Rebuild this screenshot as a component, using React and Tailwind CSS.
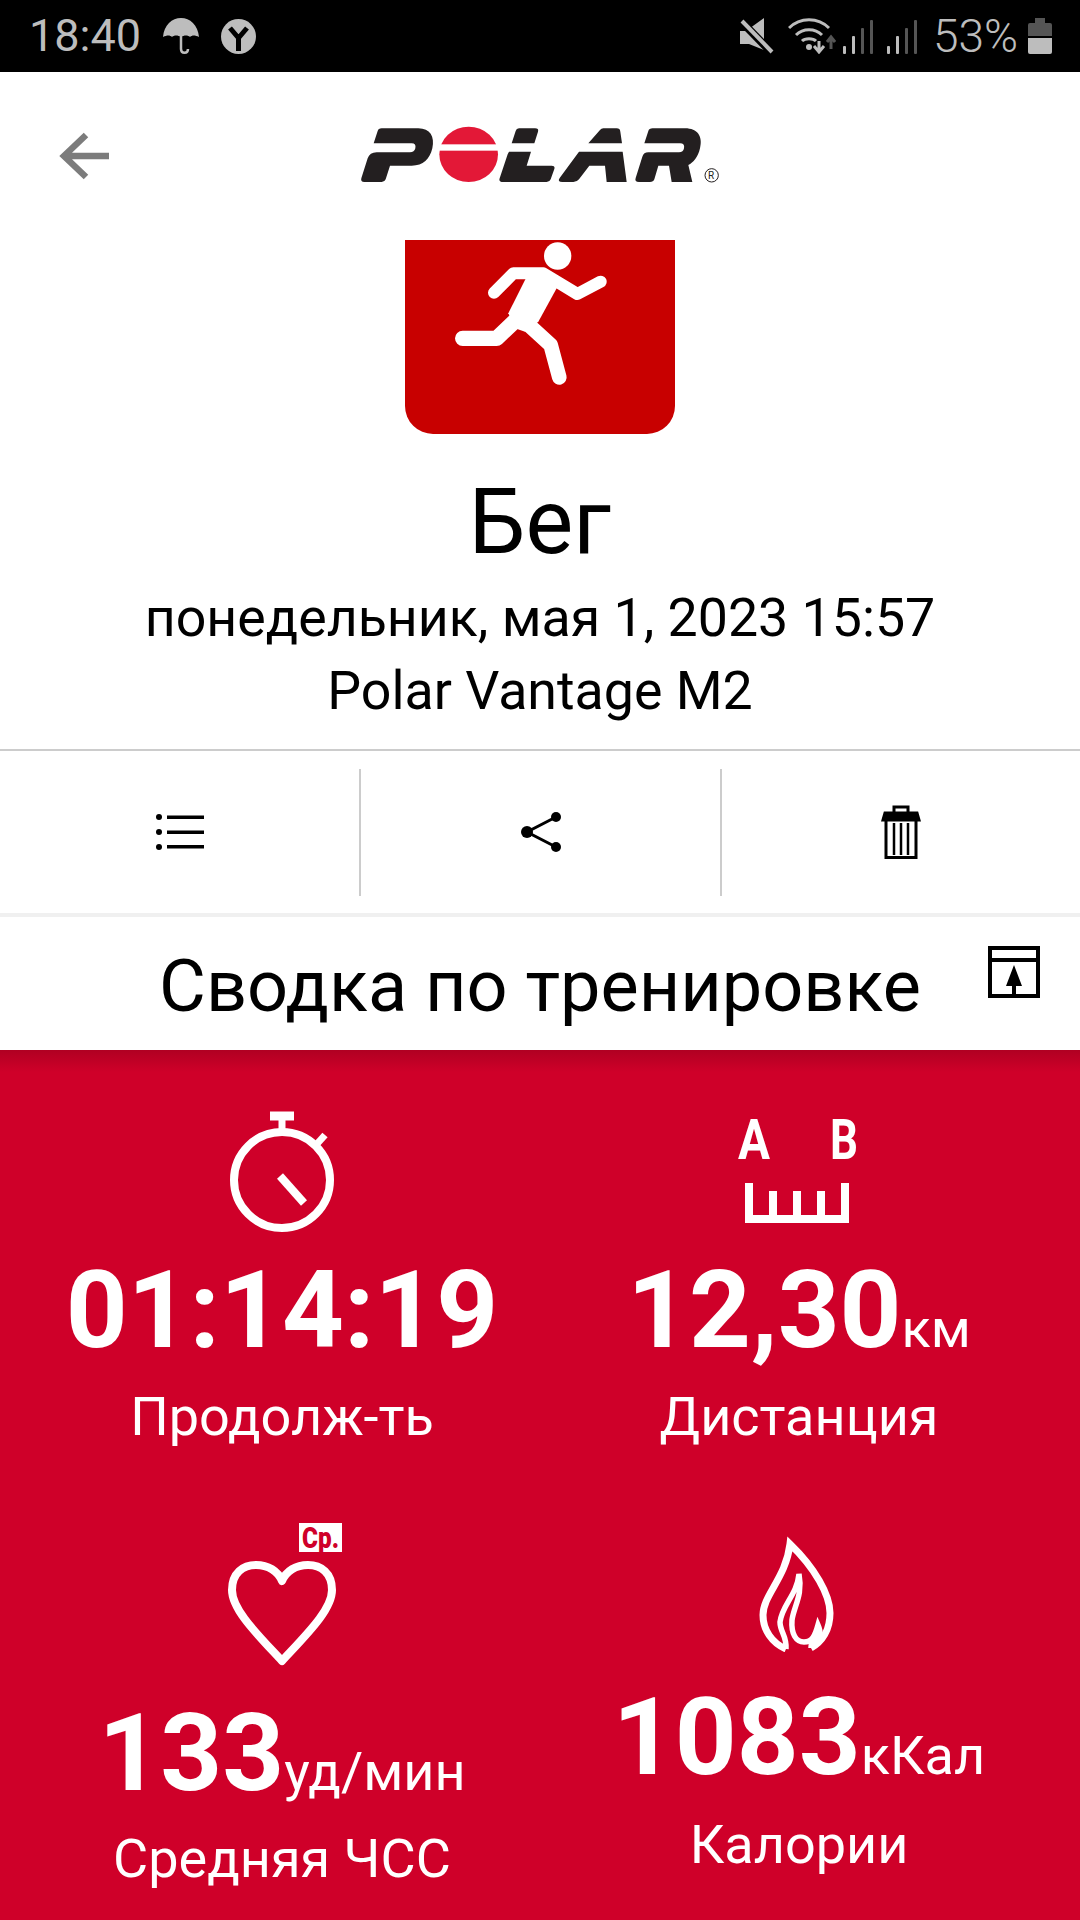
const F = { fontFamily: 'Roboto, sans-serif' };

function Stat({ value, unit, label, icon, iconH, labelClass }) {
  return (
    <div className="flex flex-col items-center">
      <div className={`flex items-start justify-center ${iconH}`}>{icon}</div>
      <div className="flex items-baseline justify-center whitespace-nowrap h-[107px]">
        <span className="text-[108px] font-bold leading-[107px]">{value}</span>
        {unit && <span className="text-[54px] leading-[54px]">{unit}</span>}
      </div>
      <div className={`text-[54px] leading-[60px] whitespace-nowrap ${labelClass}`}>{label}</div>
    </div>
  );
}

const Watch = () => (
  <svg width="110" height="122" viewBox="227 1110 110 122" fill="none" stroke="#fff">
    <path d="M270 1115h24" strokeWidth="9" />
    <path d="M282 1118v11" strokeWidth="7" />
    <circle cx="282" cy="1179" r="48" strokeWidth="8" />
    <path d="M316 1144l9-10" strokeWidth="7" />
    <path d="M280 1175l24 27" strokeWidth="8" />
  </svg>
);

const Ruler = () => (
  <svg width="132" height="124" viewBox="737 1101 132 124" fill="none" className="-mt-[10px] ml-[6px]">
    <text x="739" y="1159" fill="#fff" fontSize="56" fontWeight="700" textLength="32" lengthAdjust="spacingAndGlyphs" style={F}>A</text>
    <text x="831" y="1159" fill="#fff" fontSize="56" fontWeight="700" textLength="28" lengthAdjust="spacingAndGlyphs" style={F}>B</text>
    <path d="M750 1183v36h96V1183M774 1191v28M798 1191v28M822 1191v28" stroke="#fff" strokeWidth="8" />
  </svg>
);

const Heart = () => (
  <svg width="140" height="151" viewBox="222 1516 140 151" fill="none" className="-mt-[7px] ml-[20px]">
    <path d="M282 1661C258 1635 232 1610 232 1590 232 1573 243 1565 256 1565 268 1565 278 1571 282 1581 286 1571 296 1565 308 1565 321 1565 332 1573 332 1590 332 1610 306 1635 282 1661Z" stroke="#fff" strokeWidth="8" strokeLinejoin="round" />
    <rect x="299" y="1523" width="43" height="29" fill="#fff" />
    <text x="302" y="1548" fill="#cf0029" fontSize="30" fontWeight="900" textLength="37" lengthAdjust="spacingAndGlyphs" style={F}>Ср.</text>
  </svg>
);

const Flame = () => (
  <svg width="84" height="116" viewBox="755 1536 84 116" fill="none" stroke="#fff" strokeWidth="7" className="mt-[13px] -ml-[4px]">
    <path d="M786 1649C772 1643 763 1630 763 1615 763 1595 786 1578 790 1544 815 1568 830 1595 830 1613 830 1630 822 1642 811 1648" />
    <path d="M786 1649C787 1636 780 1632 780 1622 782 1605 797 1595 799 1574 803 1595 794 1606 792 1620 791 1634 796 1642 804 1642 812 1642 815 1636 818 1625 821 1632 821 1636 815 1640 811 1641 811 1645 811 1648" strokeWidth="5.500" />
  </svg>
);

const Signal = () => (
  <svg width="30" height="35" viewBox="0 0 30 35">
    <rect x="0" y="27" width="3" height="8" rx="1" fill="#bdbdbd" />
    <rect x="9" y="17" width="3" height="18" rx="1" fill="#bdbdbd" />
    <rect x="18" y="9" width="3" height="26" rx="1" fill="#555" />
    <rect x="27" y="1" width="3" height="34" rx="1" fill="#555" />
  </svg>
);

export default function App() {
  return (
    <div className="w-[1080px] h-[1920px] overflow-hidden bg-white flex flex-col" style={F}>
      <div className="h-[72px] shrink-0 bg-black flex items-center justify-between pl-[29px] pr-[28px] text-[#bdbdbd]">
        <div className="flex items-center">
          <span className="text-[45px] leading-[46px] font-normal">18:40</span>
          <svg width="36" height="36" viewBox="0 0 36 36" fill="#bdbdbd" className="ml-[22px]">
            <path d="M0 19C1 7 9 0 18 0s17 7 18 19c-4-2-7-2-9 0-2-2-6-2-9 0-3-2-7-2-9 0-2-2-5-2-9 0z" />
            <path d="M18 17v14c0 5 7 5 7 0" fill="none" stroke="#bdbdbd" strokeWidth="2.500" />
          </svg>
          <svg width="35" height="35" viewBox="0 0 35 35" className="ml-[22px]">
            <circle cx="17.500" cy="17.500" r="17.500" fill="#bdbdbd" />
            <path d="M9 9l8.500 10L26 9M17.500 19v13" stroke="#000" strokeWidth="5" fill="none" />
          </svg>
        </div>
        <div className="flex items-center">
          <svg width="34" height="36" viewBox="0 0 34 36" fill="#bdbdbd">
            <path d="M0 13h6L24 0v32L9 26H0z" />
            <path d="M1 3l31 32" stroke="#000" strokeWidth="8" />
            <path d="M2 3l30 31" stroke="#bdbdbd" strokeWidth="4" />
          </svg>
          <svg width="48" height="36" viewBox="0 0 48 36" fill="none" className="ml-[14px]">
            <path d="M1 10c11-11 29-11 40 0M8 17c7-7 19-7 26 0M14 23c3-3 11-3 14 0" stroke="#bdbdbd" strokeWidth="3" />
            <circle cx="21" cy="29" r="3" fill="#bdbdbd" />
            <path d="M31 23v10M26 28l5 6 5-6" stroke="#bdbdbd" strokeWidth="3" />
            <path d="M43 31V20M39 24l4-5 4 5" stroke="#555" strokeWidth="3" />
          </svg>
          <div className="ml-[7px]"><Signal /></div>
          <div className="ml-[14px]"><Signal /></div>
          <span className="text-[46px] leading-[46px] font-light ml-[16px]">53%</span>
          <svg width="24" height="36" viewBox="0 0 24 36" className="ml-[10px]">
            <path d="M7 0h10v5h5a2 2 0 012 2v11H0V7a2 2 0 012-2h5z" fill="#555" />
            <path d="M0 20h24v14a2 2 0 01-2 2H2a2 2 0 01-2-2z" fill="#bdbdbd" />
          </svg>
        </div>
      </div>

      <div className="relative h-[168px] shrink-0 flex justify-center">
        <svg width="50" height="48" viewBox="0 0 50 48" className="absolute left-[59px] top-[60px]" fill="none" stroke="#7c7c7c" strokeWidth="6.500">
          <path d="M50 24H6M27 3L5 24l22 21" />
        </svg>
        <svg width="370" height="70" viewBox="0 0 1110 210" className="mt-[48px]">
          <path fill="#231f20" d="M80 25H190C225 25 240 50 232 85 224 118 205 137 170 137H105L92 178Q89 186 80 186H28Q16 186 19 175L38 115Q44 97 65 97H165Q178 97 181 85 184 70 170 70H56L68 33Q70 25 80 25Z" />
          <ellipse cx="341" cy="103" rx="88" ry="83" fill="#e31837" />
          <rect x="245" y="73" width="195" height="19" fill="#fff" />
          <path fill="#231f20" d="M492 25H540Q552 25 549 35L538 70H470L482 33Q484 25 492 25Z" />
          <path fill="#231f20" d="M462 95H528L515 137H590Q601 137 598 147L587 178Q584 186 575 186H445Q430 186 434 175L458 103Z" />
          <path fill="#231f20" d="M745 25H785Q795 25 796 35L801 70H700L735 30Q739 25 745 25Z" />
          <path fill="#231f20" d="M672 95H803L815 186H755L750 137H703L672 178Q666 186 655 186H622Q606 186 614 174Z" />
          <path fill="#231f20" d="M893 25H990C1028 25 1044 50 1035 85 1029 112 1015 128 1000 135L1012 186H950L942 137H910L898 178Q895 186 885 186H852Q838 186 842 174L862 110Q866 97 880 97H972Q985 97 987 85 990 70 975 70H868L880 33Q882 25 893 25Z" />
          <circle cx="1070" cy="166" r="20" fill="none" stroke="#231f20" strokeWidth="3" />
          <text x="1059" y="177" fontSize="30" fill="#231f20" style={F}>R</text>
        </svg>
      </div>

      <div className="flex justify-center shrink-0">
        <div className="w-[270px] h-[194px] bg-[#c80000] rounded-b-[28px]">
          <svg width="270" height="194" viewBox="75 60 810 582" fill="#fff">
            <circle cx="533" cy="108" r="41" />
            <path d="M342 218L400 160H490L592 222 662 185" fill="none" stroke="#fff" strokeWidth="36" strokeLinecap="round" strokeLinejoin="round" />
            <path d="M440 170L500 150 530 205 475 305 435 335 405 325 385 280z" />
            <path d="M248 355H350L410 298" fill="none" stroke="#fff" strokeWidth="46" strokeLinecap="round" strokeLinejoin="round" />
            <path d="M430 300L512 375 538 472" fill="none" stroke="#fff" strokeWidth="44" strokeLinecap="round" strokeLinejoin="round" />
          </svg>
        </div>
      </div>

      <div className="text-center text-[90px] leading-[100px] mt-[39px] text-black">Бег</div>
      <div className="text-center text-[53.700px] leading-[64px] mt-[13px] text-black whitespace-nowrap">понедельник, мая 1, 2023 15:57</div>
      <div className="text-center text-[53.700px] leading-[64px] mt-[9px] text-black">Polar Vantage M2</div>

      <div className="mt-[26px] shrink-0 border-t-2 border-t-[#cccccc] h-[168px] flex items-center border-b-4 border-b-[#f0f0f0] pl-[1px]">
        <div className="flex-1 h-[127px] flex items-center justify-center">
          <svg width="48" height="36" viewBox="0 0 48 36" fill="#000">
            <circle cx="3" cy="3" r="3" /><circle cx="3" cy="18" r="3" /><circle cx="3" cy="33" r="3" />
            <rect x="11" y="1.500" width="37" height="3.500" /><rect x="11" y="16.500" width="37" height="3.500" /><rect x="11" y="31" width="37" height="3.500" />
          </svg>
        </div>
        <div className="flex-1 h-[127px] flex items-center justify-center border-l-2 border-r-2 border-[#cccccc]">
          <svg width="42" height="40" viewBox="0 0 42 40" fill="#000">
            <circle cx="37" cy="5" r="5" /><circle cx="8" cy="20" r="6" /><circle cx="37" cy="35" r="5" />
            <path d="M37 5L8 20l29 15" fill="none" stroke="#000" strokeWidth="3" />
          </svg>
        </div>
        <div className="flex-1 h-[127px] flex items-center justify-center">
          <svg width="40" height="54" viewBox="0 0 40 54" fill="none" stroke="#000" strokeWidth="3">
            <path d="M13 7V2h14v5" />
            <path d="M2 15l2-7h32l2 7z" fill="#000" />
            <path d="M5 15v37.500h30V15" />
            <path d="M13 18v32M20 18v32M27 18v32" strokeWidth="2.500" />
          </svg>
        </div>
      </div>

      <div className="relative h-[133px] shrink-0 flex items-center justify-center pt-[6px]">
        <span className="text-[72px] leading-[80px] text-black whitespace-nowrap">Сводка по тренировке</span>
        <svg width="52" height="52" viewBox="0 0 52 52" fill="none" stroke="#000" strokeWidth="4" className="absolute left-[988px] top-[29px]">
          <rect x="2" y="2" width="48" height="48" />
          <path d="M2 14h48" />
          <path d="M26 19l-8 21h6v10h4V40h6z" fill="#000" stroke="none" />
        </svg>
      </div>

      <div className="flex-1 bg-[#cf0029] text-white relative">
        <div className="absolute inset-x-0 top-0 h-[22px] bg-gradient-to-b from-[#b00022] to-[#cf0029]"></div>
        <div className="relative grid grid-cols-[564px_1fr] gap-y-[76px] pt-[61px] pr-[46px]">
          <Stat iconH="h-[146px]" icon={<Watch />} value="01:14:19" label="Продолж-ть" labelClass="mt-[23px]" />
          <Stat iconH="h-[146px]" icon={<Ruler />} value="12,30" unit="км" label="Дистанция" labelClass="mt-[23px]" />
          <Stat iconH="h-[177px]" icon={<Heart />} value="133" unit="уд/мин" label="Средняя ЧСС" labelClass="mt-[22px]" />
          <Stat iconH="h-[161px]" icon={<Flame />} value="1083" unit="кКал" label="Калории" labelClass="mt-[24px]" />
        </div>
      </div>
    </div>
  );
}
